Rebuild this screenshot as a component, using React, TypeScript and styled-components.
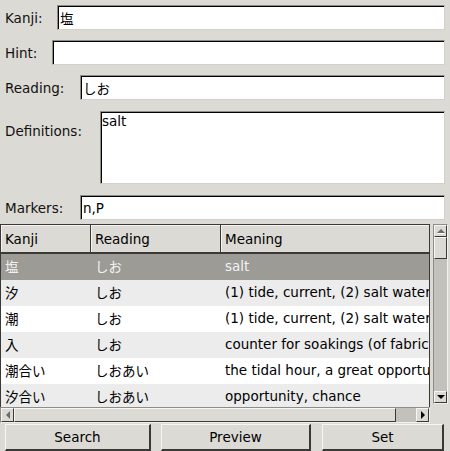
import React from 'react';
import styled, {createGlobalStyle} from "styled-components";

const GlobalStyle = createGlobalStyle`
  html, body {
    margin: 0;
    padding: 0;
    background: #dcdad5;
  }
  body {
    font-family: "DejaVu Sans", "Noto Sans CJK JP", sans-serif;
    font-size: 13.5px;
    color: #000;
  }
`

interface Entry {
  kanji: string;
  reading: string;
  meaning: string;
}

const entries: Entry[] = [
  {kanji: '塩', reading: 'しお', meaning: 'salt'},
  {kanji: '汐', reading: 'しお', meaning: '(1) tide, current, (2) salt water, (3) opportunity'},
  {kanji: '潮', reading: 'しお', meaning: '(1) tide, current, (2) salt water, (3) opportunity'},
  {kanji: '入', reading: 'しお', meaning: 'counter for soakings (of fabric in dye)'},
  {kanji: '潮合い', reading: 'しおあい', meaning: 'the tidal hour, a great opportunity'},
  {kanji: '汐合い', reading: 'しおあい', meaning: 'opportunity, chance'},
]

const App = () => {
  return (
    <Window>
      <GlobalStyle/>
      <Form>
        <FieldRow $top={5} $bottom={5}>
          <Label $width={57}>Kanji:</Label>
          <Entry defaultValue="塩"/>
        </FieldRow>
        <FieldRow $top={5} $bottom={5}>
          <Label $width={52}>Hint:</Label>
          <Entry defaultValue=""/>
        </FieldRow>
        <FieldRow $top={5} $bottom={5}>
          <Label $width={80}>Reading:</Label>
          <Entry defaultValue="しお"/>
        </FieldRow>
        <FieldRow $top={6} $bottom={5} $alignTop>
          <Label $width={100} $offset={12}>Definitions:</Label>
          <TextBox defaultValue="salt"/>
        </FieldRow>
        <FieldRow $top={6} $bottom={4}>
          <Label $width={80}>Markers:</Label>
          <Entry defaultValue="n,P"/>
        </FieldRow>
      </Form>
      <TablePane>
        <Tree>
          <TreeHeader>
            <HeaderCell $width={90}>Kanji</HeaderCell>
            <HeaderCell $width={130}>Reading</HeaderCell>
            <HeaderCell $width={232}>Meaning</HeaderCell>
          </TreeHeader>
          <TreeBody>
            {entries.map((e, i) => (
              <TreeRow key={i} $selected={i === 0} $striped={i % 2 === 1}>
                <Cell $width={90}>{e.kanji}</Cell>
                <Cell $width={130}>{e.reading}</Cell>
                <Cell $width={232}>{e.meaning}</Cell>
              </TreeRow>
            ))}
          </TreeBody>
        </Tree>
        <VScroll>
          <ArrowButton $dir="up"><Arrow $dir="up"/></ArrowButton>
          <VThumb/>
          <Spacer/>
          <ArrowButton $dir="down"><Arrow $dir="down"/></ArrowButton>
        </VScroll>
        <HScroll>
          <ArrowButton $dir="left"><Arrow $dir="left"/></ArrowButton>
          <HThumb/>
          <Spacer/>
          <ArrowButton $dir="right"><Arrow $dir="right"/></ArrowButton>
        </HScroll>
        <Corner/>
      </TablePane>
      <ButtonBar>
        <Button>Search</Button>
        <Button>Preview</Button>
        <Button>Set</Button>
      </ButtonBar>
    </Window>
  );
};

const Window = styled.div`
  width: 450px;
  height: 451px;
  overflow: hidden;
  display: flex;
  flex-direction: column;
  background: #dcdad5;
`
const Form = styled.div`
  display: flex;
  flex-direction: column;
  padding-right: 5px;
`
const FieldRow = styled.div<{$top: number; $bottom: number; $alignTop?: boolean}>`
  display: flex;
  align-items: ${({$alignTop}) => $alignTop ? 'flex-start' : 'center'};
  padding-top: ${({$top}) => $top}px;
  padding-bottom: ${({$bottom}) => $bottom}px;
`
const Label = styled.label<{$width: number; $offset?: number}>`
  box-sizing: border-box;
  flex: 0 0 ${({$width}) => $width}px;
  padding-left: 5px;
  margin-top: ${({$offset}) => $offset || 0}px;
  white-space: nowrap;
  color: #111;
`
// tk-style sunken field: gray outer edge, black inner edge top/left
const sunken = `
  box-sizing: border-box;
  border-style: solid;
  border-width: 1px;
  border-color: #8e8c87 #d2d0cb #d2d0cb #8e8c87;
  box-shadow: inset 1px 1px 0 #000;
  outline: none;
`
const Entry = styled.input`
  ${sunken};
  flex: 1;
  min-width: 0;
  height: 25px;
  padding: 1px 0 0 2px;
  background: #fff;
  font: inherit;
  color: #000;
`
const TextBox = styled.textarea`
  ${sunken};
  flex: 1;
  height: 73px;
  padding: 1px 0 0 1px;
  resize: none;
  background: #fff;
  font: inherit;
  line-height: 17px;
  color: #000;
`
const TablePane = styled.div`
  display: grid;
  grid-template-columns: 430px 20px;
  grid-template-rows: 183px 16px;
`
const Tree = styled.div`
  overflow: hidden;
  border-left: 1px solid #3a3936;
  border-top: 1px solid #3a3936;
  border-right: 1px solid #3a3936;
  background: #fff;
`
const TreeHeader = styled.div`
  display: flex;
  height: 27px;
  border-bottom: 2px solid #3a3936;
  background: #dcdad5;
`
const HeaderCell = styled.div<{$width: number}>`
  box-sizing: border-box;
  flex: 0 0 ${({$width}) => $width}px;
  display: flex;
  align-items: center;
  padding-left: 4px;
  border-right: 1px solid #3a3936;
  box-shadow: inset 1px 1px 0 #f5f4f1;
  white-space: nowrap;
`
const TreeBody = styled.div`
  display: flex;
  flex-direction: column;
`
const TreeRow = styled.div<{$selected?: boolean; $striped?: boolean}>`
  display: flex;
  height: 26px;
  flex-shrink: 0;
  align-items: center;
  padding-bottom: 2px;
  box-sizing: border-box;
  background: ${({$selected, $striped}) => $selected ? '#9d9b96' : $striped ? '#ececec' : '#fff'};
  color: ${({$selected}) => $selected ? '#f2f2f2' : '#000'};
`
const Cell = styled.div<{$width: number}>`
  box-sizing: border-box;
  flex: 0 0 ${({$width}) => $width}px;
  padding-left: 4px;
  white-space: nowrap;
  overflow: hidden;
`
const VScroll = styled.div`
  margin: 0 2px 3px 3px;
  display: flex;
  flex-direction: column;
  background: #c3c1bb;
  border: 1px solid #8e8c87;
  border-color: #8e8c87 #f2f1ee #f2f1ee #8e8c87;
`
const HScroll = styled.div`
  display: flex;
  background: #c3c1bb;
  border: 1px solid #8e8c87;
  border-color: #8e8c87 #f2f1ee #f2f1ee #8e8c87;
`
const Corner = styled.div`
  background: #dcdad5;
`
const raised = `
  box-sizing: border-box;
  background: #dcdad5;
  border-style: solid;
  border-width: 1px;
  border-color: #f7f6f3 #3a3936 #3a3936 #f7f6f3;
`
const ArrowButton = styled.div<{$dir: string}>`
  ${raised};
  flex: 0 0 ${({$dir}) => ($dir === 'up' || $dir === 'down') ? 12 : 13}px;
  display: flex;
  align-items: center;
  justify-content: center;
`
const Arrow = styled.div<{$dir: 'up' | 'down' | 'left' | 'right'}>`
  width: 0;
  height: 0;
  border: 4px solid transparent;
  ${({$dir}) => $dir === 'up' && `border-bottom-color: #6e6c68; border-top-width: 0; border-bottom-width: 4px; filter: drop-shadow(0 1px 0 #fff);`}
  ${({$dir}) => $dir === 'down' && `border-top-color: #000; border-bottom-width: 0; border-top-width: 4px;`}
  ${({$dir}) => $dir === 'left' && `border-right-color: #6e6c68; border-left-width: 0; border-right-width: 4px;`}
  ${({$dir}) => $dir === 'right' && `border-left-color: #000; border-right-width: 0; border-left-width: 4px;`}
`
const VThumb = styled.div`
  ${raised};
  flex: 0 0 22px;
`
const HThumb = styled.div`
  ${raised};
  flex: 0 0 382px;
`
const Spacer = styled.div`
  flex: 1;
`
const ButtonBar = styled.div`
  display: grid;
  grid-template-columns: 146px 150px 123px;
  column-gap: 10px;
  padding: 1px 0 0 5px;
`
const Button = styled.button`
  ${raised};
  border-width: 1px 2px 2px 1px;
  height: 27px;
  font: inherit;
  color: #000;
  padding: 0;
  &:nth-child(3) {
    margin-left: 1px;
  }
`
export default App;
